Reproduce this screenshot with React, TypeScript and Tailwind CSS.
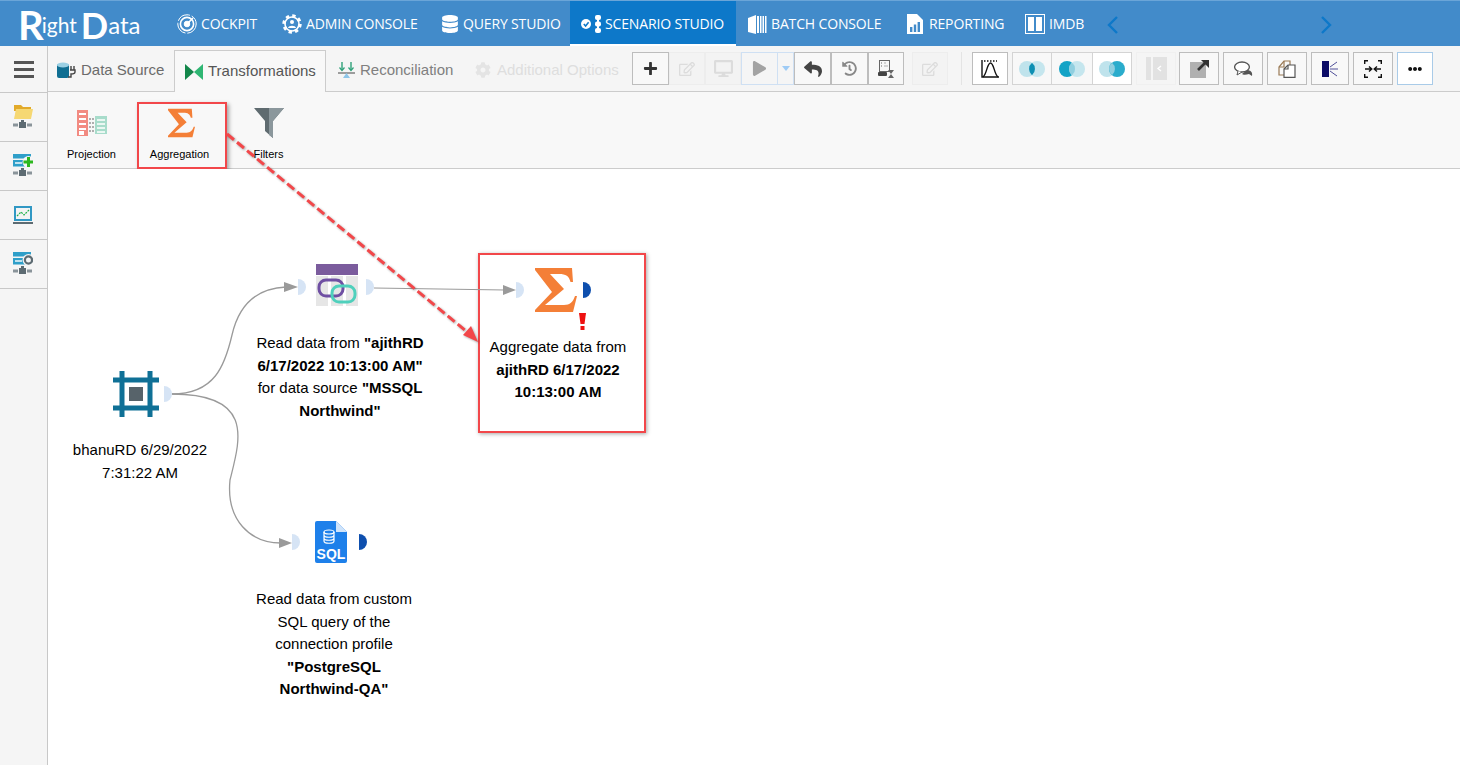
import React from "react";
import { FaDatabase, FaReply, FaHistory, FaPlus, FaPlay, FaDesktop, FaRegEdit, FaCog, FaEllipsisH } from "react-icons/fa";

const CockpitIcon = () => (
  <svg width="20" height="20" viewBox="0 0 20 20" fill="none" stroke="#fff">
    <circle cx="10" cy="10" r="9.2" strokeWidth="1" strokeDasharray="14 2" />
    <circle cx="10" cy="10" r="6.6" strokeWidth="1.6" />
    <circle cx="10" cy="10" r="2.8" fill="#fff" strokeWidth="1" />
    <path d="M10 10 L16 4" strokeWidth="1.6" />
  </svg>
);

const AdminIcon = () => (
  <svg width="20" height="20" viewBox="0 0 20 20" fill="none" stroke="#fff">
    <circle cx="10" cy="10" r="8" strokeWidth="3.4" strokeDasharray="3.2 3.08" />
    <circle cx="10" cy="10" r="7" strokeWidth="1.6" />
    <circle cx="10" cy="8" r="2" fill="#fff" stroke="none" />
    <path d="M6 14 C6.5 11 13.5 11 14 14 Z" fill="#fff" stroke="none" />
  </svg>
);

const ScenarioIcon = () => (
  <svg width="20" height="20" viewBox="0 0 20 20">
    <circle cx="5" cy="10" r="5" fill="#fff" />
    <path d="M2.8 10 L4.6 12 L7.6 8.2" stroke="#0d78c9" strokeWidth="1.5" fill="none" />
    <rect x="14" y="1" width="6" height="5" rx="2" fill="#fff" />
    <rect x="14" y="7.5" width="6" height="5" rx="2" fill="#fff" />
    <rect x="14" y="14" width="6" height="5" rx="2" fill="#fff" />
    <rect x="16" y="4" width="2" height="12" fill="#fff" />
  </svg>
);

const BatchIcon = () => (
  <svg width="19" height="20" viewBox="0 0 19 20">
    <path d="M0 4 L8 1 V20 L0 18 Z" fill="#fff" />
    <rect x="9" y="2" width="2" height="17" fill="#fff" />
    <rect x="12" y="2" width="1.5" height="17" fill="#fff" />
    <rect x="14.5" y="2" width="1.5" height="17" fill="#fff" />
    <rect x="17" y="2" width="1.5" height="17" fill="#fff" />
  </svg>
);

const ReportingIcon = () => (
  <svg width="16" height="20" viewBox="0 0 16 20">
    <path d="M0 0 H10 L16 6 V20 H0 Z" fill="#fff" />
    <rect x="3" y="13" width="2.4" height="5" fill="#428bca" />
    <rect x="6.8" y="10.5" width="2.4" height="7.5" fill="#428bca" />
    <rect x="10.6" y="8" width="2.4" height="10" fill="#428bca" />
  </svg>
);

const ImdbIcon = () => (
  <svg width="20" height="20" viewBox="0 0 20 20">
    <rect x="0.5" y="0.5" width="19" height="19" fill="none" stroke="#fff" />
    <rect x="3" y="3" width="6" height="14" fill="#fff" />
    <rect x="11" y="3" width="6" height="14" fill="#fff" />
  </svg>
);

const navItems = [
  { label: "COCKPIT", icon: <CockpitIcon />, cls: "w-[105px] gap-[4px] pl-[11px] border-transparent" },
  { label: "ADMIN CONSOLE", icon: <AdminIcon />, cls: "w-[159px] gap-[4px] pl-[11px] border-transparent" },
  { label: "QUERY STUDIO", icon: <FaDatabase size={18} color="#fff" />, cls: "w-[140px] gap-[4px] pl-[11px] border-transparent" },
  { label: "SCENARIO STUDIO", icon: <ScenarioIcon />, cls: "w-[166px] gap-[4px] pl-[11px] border-white bg-[#0d78c9]" },
  { label: "BATCH CONSOLE", icon: <BatchIcon />, cls: "w-[160px] gap-[4px] pl-[12px] border-transparent" },
  { label: "REPORTING", icon: <ReportingIcon />, cls: "w-[118px] gap-[6px] pl-[11px] border-transparent" },
  { label: "IMDB", icon: <ImdbIcon />, cls: "w-[79px] gap-[4px] pl-[11px] border-transparent" },
];

const Chevron = ({ d }: { d: string }) => (
  <svg width="12" height="20" viewBox="0 0 12 20" fill="none" stroke="#0d78c9" strokeWidth="2.4">
    <path d={d} />
  </svg>
);

const TopBar = () => (
  <div className="flex h-[46px] items-stretch border-t border-[#6aa5d8] bg-[#428bca] text-white font-['Open_Sans',sans-serif]">
    <div className="flex w-[166px] shrink-0 items-center pl-[18px] pt-[2px] font-['Lato',sans-serif] font-bold leading-none">
      <span className="text-[40px]">R</span>
      <span className="-ml-[2px] text-[21px] font-normal">ight</span>
      <span className="ml-[4px] text-[36px]">D</span>
      <span className="text-[24px] font-normal">ata</span>
    </div>
    {navItems.map((item) => (
      <div key={item.label} className={`flex shrink-0 items-center border-b-2 pt-[2px] ${item.cls}`}>
        {item.icon}
        <span className="text-[14px] tracking-[-0.15px]">{item.label}</span>
      </div>
    ))}
    <div className="ml-[14px] flex items-center pt-[2px]">
      <Chevron d="M10 2 L2 10 L10 18" />
    </div>
    <div className="ml-[201px] flex items-center pt-[2px]">
      <Chevron d="M2 2 L10 10 L2 18" />
    </div>
  </div>
);

const DbIcon = () => (
  <svg width="20" height="17" viewBox="0 0 20 17">
    <rect x="0" y="2" width="12" height="14" rx="2" fill="#0f6e92" />
    <ellipse cx="6" cy="3" rx="6" ry="2.4" fill="#9bd0e4" />
    <path d="M14 4 V8 M17 4 V8 M13 8 H18 V10 C18 12 14 12 14 12 V15 H11" stroke="#444" strokeWidth="1.4" fill="none" />
  </svg>
);

const BowtieIcon = () => (
  <svg width="18" height="16" viewBox="0 0 18 16">
    <path d="M0 0 L9 8 L0 16 Z" fill="#13874b" />
    <path d="M18 0 L9 8 L18 16 Z" fill="#2fb673" />
  </svg>
);

const ReconIcon = () => (
  <svg width="17" height="17" viewBox="0 0 17 17" fill="none">
    <path d="M4 0 V8 M13 0 V8" stroke="#2fa27a" strokeWidth="1.4" />
    <path d="M1.5 5.5 L4 8.5 L6.5 5.5 M10.5 5.5 L13 8.5 L15.5 5.5" stroke="#2fa27a" strokeWidth="1.2" />
    <path d="M0 11 H17" stroke="#777" strokeWidth="1.4" />
    <path d="M8.5 11 L5 16 H12 Z" fill="#8dc5e8" />
  </svg>
);

const BellIcon = () => (
  <svg width="18" height="18" viewBox="0 0 18 18" fill="none" stroke="#111" strokeWidth="1.4">
    <path d="M1 0 V17 H18" />
    <path d="M2 17 C6 14 6 3 9.5 3 C13 3 13 14 17 17" />
    <path d="M3 1 H16" strokeDasharray="1.5 1.5" />
  </svg>
);

const Venn = ({ mode }: { mode: "inner" | "left" | "right" }) => (
  <svg width="26" height="16" viewBox="0 0 26 16">
    <circle cx="8" cy="8" r="8" fill={mode === "left" ? "#13a3c6" : "#bfe3ec"} />
    <circle cx="18" cy="8" r="8" fill={mode === "right" ? "#13a3c6" : "#bfe3ec"} fillOpacity="0.9" />
    <path d="M13 1.8 A8 8 0 0 1 13 14.2 A8 8 0 0 1 13 1.8 Z" fill={mode === "inner" ? "#0d8fb3" : "#8fcfe0"} />
  </svg>
);

const HourglassIcon = () => (
  <svg width="16" height="18" viewBox="0 0 16 18">
    <rect x="1.5" y="0.5" width="10" height="11" fill="none" stroke="#666" />
    <path d="M3 3 H5 M6.5 3 H8 M3 6 H5 M6.5 6 H10" stroke="#666" strokeDasharray="1 1" />
    <rect x="0" y="12" width="9" height="4" rx="1" fill="#444" />
    <path d="M10 10 H16 L13 14 L16 18 H10 L13 14 Z" fill="#666" />
  </svg>
);

const ExportIcon = () => (
  <svg width="19" height="18" viewBox="0 0 19 18">
    <rect x="0" y="2" width="16" height="16" fill="#b0b0b0" />
    <path d="M8 10 L16 2" stroke="#333" strokeWidth="2.6" />
    <path d="M11 0 H19 V8 Z" fill="#333" />
  </svg>
);

const CommentsIcon = () => (
  <svg width="19" height="15" viewBox="0 0 19 15" fill="none">
    <path d="M13 9 C16 9 19 11 18 15 L15 13 C12 14 9 14 8 13 Z" fill="#555" />
    <ellipse cx="8" cy="6" rx="7.4" ry="5" fill="#fff" stroke="#555" strokeWidth="1.3" />
    <path d="M4 10 L3 14 L8 11" fill="#fff" stroke="#555" />
  </svg>
);

const CopyIcon = () => (
  <svg width="18" height="18" viewBox="0 0 18 18" fill="none" strokeWidth="1.2">
    <path d="M12 5 V1 H6 L1 7 V15 H6" stroke="#9a7a55" />
    <path d="M6 1 V7 H1" stroke="#9a7a55" />
    <path d="M6 9 L10 5 H17 V17.4 H6 Z" fill="#fff" stroke="#555" />
    <path d="M10 5 V9 H6" stroke="#555" />
  </svg>
);

const SplitIcon = () => (
  <svg width="16" height="16" viewBox="0 0 16 16">
    <rect x="0" y="0" width="7" height="16" fill="#0b0b66" />
    <path d="M8 6 L15 1 M8 8 H16 M8 10 L15 15" stroke="#3d3d8f" strokeWidth="0.9" />
  </svg>
);

const CollapseIcon = () => (
  <svg width="18" height="18" viewBox="0 0 18 18" fill="none" stroke="#111" strokeWidth="1.4">
    <path d="M0.7 4 V0.7 H4 M14 0.7 H17.3 V4 M0.7 14 V17.3 H4 M14 17.3 H17.3 V14" />
    <path d="M1 9 H7.5 M5 6.5 L7.8 9 L5 11.5 M17 9 H10.5 M13 6.5 L10.2 9 L13 11.5" />
  </svg>
);

const PanelIcon = () => (
  <svg width="21" height="23" viewBox="0 0 21 23">
    <rect x="0" y="0" width="5" height="23" fill="#e2e2e2" />
    <rect x="7" y="0" width="14" height="23" fill="#e2e2e2" />
    <path d="M15 9 L12 11.5 L15 14" stroke="#fff" strokeWidth="1.4" fill="none" />
  </svg>
);

const btn = "flex h-[33px] items-center justify-center border border-[#bdbdbd] bg-[#f8f8f8]";
const ghost = "flex h-[33px] items-center justify-center border border-[#ededed] bg-[#f3f3f3]";

const Toolbar = () => (
  <div className="flex items-center">
    <div className="flex">
      <div className={`${btn} w-[37px]`}><FaPlus size={15} color="#333" /></div>
      <div className={`${ghost} w-[36px]`}><FaRegEdit size={16} color="#dcdcdc" /></div>
      <div className={`${ghost} w-[36px]`}><FaDesktop size={19} color="#dcdcdc" /></div>
      <div className="flex h-[33px] w-[37px] items-center justify-center border border-[#cfe0f3] bg-[#f5f5f5]"><FaPlay size={15} color="#a3a3a3" /></div>
      <div className="flex h-[33px] w-[16px] items-center justify-center border-y border-r border-[#cfe0f3] bg-[#f5f5f5]">
        <div className="h-0 w-0 border-x-[4px] border-t-[5px] border-x-transparent border-t-[#9ecbf5]" />
      </div>
      <div className={`${btn} w-[37px]`}><FaReply size={18} color="#444" /></div>
      <div className={`${btn} w-[37px]`}><FaHistory size={15} color="#888" /></div>
      <div className={`${btn} w-[36px]`}><HourglassIcon /></div>
    </div>
    <div className={`${ghost} ml-[8px] w-[36px]`}><FaRegEdit size={16} color="#dcdcdc" /></div>
    <div className="ml-[13px] h-[33px] w-px bg-[#e4e4e4]" />
    <div className="ml-[10px] flex h-[33px] w-[36px] items-center justify-center border border-[#bdbdbd] bg-white"><BellIcon /></div>
    <div className="ml-[4px] flex">
      <div className="flex h-[33px] w-[40px] items-center justify-center border border-[#d4d4d4] bg-[#f8f8f8]"><Venn mode="inner" /></div>
      <div className="flex h-[33px] w-[40px] items-center justify-center border-y border-[#d4d4d4] bg-[#f8f8f8]"><Venn mode="left" /></div>
      <div className="flex h-[33px] w-[40px] items-center justify-center border border-[#d4d4d4] bg-white"><Venn mode="right" /></div>
    </div>
    <div className="ml-[4px] flex h-[33px] w-[40px] items-center justify-center border border-[#f0f0f0]"><PanelIcon /></div>
    <div className="ml-[3px] flex h-[33px] w-[40px] items-center justify-center border border-[#bdbdbd] bg-[#f8f8f8]"><ExportIcon /></div>
    <div className={`${btn} ml-[4px] w-[40px]`}><CommentsIcon /></div>
    <div className={`${btn} ml-[4px] w-[40px]`}><CopyIcon /></div>
    <div className={`${btn} ml-[4px] w-[38px]`}><SplitIcon /></div>
    <div className={`${btn} ml-[4px] w-[40px]`}><CollapseIcon /></div>
    <div className="ml-[4px] flex h-[33px] w-[36px] items-center justify-center border border-[#a9cbe8] bg-white"><FaEllipsisH size={14} color="#111" /></div>
  </div>
);

const TabRow = () => (
  <div className="relative flex h-[46px] border-b border-[#cccccc] bg-[#f5f5f5] text-[15px] font-['Liberation_Sans',sans-serif]">
    <div className="flex w-[126px] items-center gap-[4px] pl-[9px] pt-[3px] text-[#6b6b6b]">
      <DbIcon />
      <span>Data Source</span>
    </div>
    <div className="mt-[4px] -mb-px flex h-[42px] w-[152px] items-center gap-[5px] border border-b-0 border-[#cccccc] bg-[#f8f8f8] pl-[10px] text-[#555555]">
      <BowtieIcon />
      <span>Transformations</span>
    </div>
    <div className="flex w-[149px] items-center gap-[5px] pl-[12px] pt-[3px] text-[#808080]">
      <ReconIcon />
      <span>Reconciliation</span>
    </div>
    <div className="flex w-[151px] items-center gap-[6px] pt-[3px] text-[#dedede]">
      <FaCog size={16} color="#e4e4e4" />
      <span>Additional Options</span>
    </div>
    <div className="ml-[6px] flex items-center"><Toolbar /></div>
  </div>
);

const ProjectionIcon = () => (
  <svg width="30" height="26" viewBox="0 0 30 26">
    <rect x="0" y="0" width="11" height="26" fill="#f28b82" />
    <path d="M2 4 H9 M2 9 H9 M2 14 H9 M2 19 H9" stroke="#fff" strokeWidth="2" />
    <rect x="2" y="21" width="5" height="4" fill="#fff" />
    <rect x="18" y="6" width="12" height="18" fill="#a8dccb" />
    <path d="M20 10 H28 M20 14 H28 M20 18 H28 M20 22 H28" stroke="#fff" strokeWidth="1.5" />
    <path d="M12 9 H17 M12 13 H17 M12 17 H17 M12 21 H17" stroke="#666" strokeWidth="1.2" strokeDasharray="2 1" />
  </svg>
);

const Sigma = ({ w, h }: { w: number; h: number }) => (
  <svg width={w} height={h} viewBox="0 0 42 44">
    <path d="M0 0 H37 L38 14 H35.5 C34 8 31 6 24 6 H15 L29 21 L10 37 H29 C35 37 38 34 40 28 H42 L38 44 H0 V42 L17 24 L0 2 Z" fill="#f47f37" />
  </svg>
);

const Funnel = () => (
  <svg width="30" height="30" viewBox="0 0 30 30">
    <path d="M0 0 H30 L19 13 V30 L11 23 V13 Z" fill="#5f6b70" />
    <path d="M15 0 H30 L19 13 V30 L15 27 Z" fill="#8b979c" />
  </svg>
);

const Ribbon = () => (
  <div className="flex h-[77px] border-b border-[#cccccc] bg-[#f8f8f8] text-[11px] text-black font-['Liberation_Sans',sans-serif]">
    <div className="flex w-[87px] flex-col items-center pt-[16px]">
      <div className="flex h-[30px] items-center"><ProjectionIcon /></div>
      <span className="mt-[8px]">Projection</span>
    </div>
    <div className="relative flex w-[89px] flex-col items-center pt-[16px]">
      <div className="flex h-[30px] items-center pl-[3px]"><Sigma w={27} h={30} /></div>
      <span className="mt-[8px]">Aggregation</span>
      <div className="absolute left-[2px] top-[10px] h-[67px] w-[90px] border-2 border-[#f2474a] shadow-[2px_2px_4px_rgba(0,0,0,0.35)]" />
    </div>
    <div className="flex w-[89px] flex-col items-center pt-[16px]">
      <div className="flex h-[30px] items-center"><Funnel /></div>
      <span className="mt-[8px]">Filters</span>
    </div>
  </div>
);

const SideBase = ({ y }: { y: number }) => (
  <g transform={`translate(0,${y})`}>
    <rect x="8" y="0" width="3" height="2" fill="#5d6b72" />
    <rect x="6" y="2" width="7" height="6" fill="#5d6b72" />
    <rect x="0" y="3.5" width="5" height="3" fill="#8a949a" />
    <rect x="14" y="3.5" width="5" height="3" fill="#8a949a" />
  </g>
);

const sideIcons = [
  <svg key="a" width="20" height="24" viewBox="0 0 20 24">
    <path d="M1 0 H8 L10 2 H18 V6 H1 Z" fill="#e2aa2a" />
    <path d="M3 4 H20 L18 14 H1 Z" fill="#f6d873" />
    <SideBase y={15} />
  </svg>,
  <svg key="b" width="20" height="24" viewBox="0 0 20 24">
    <rect x="0" y="0" width="18" height="4.5" fill="#2f9fc9" />
    <rect x="0" y="6" width="14" height="6.5" fill="#2f9fc9" />
    <path d="M2 9 H9" stroke="#fff" strokeWidth="1.4" />
    <circle cx="15.5" cy="8" r="6" fill="#f5f5f5" />
    <path d="M15.5 3 V13 M10.5 8 H20" stroke="#2db81e" strokeWidth="3" />
    <SideBase y={14} />
  </svg>,
  <svg key="c" width="20" height="19" viewBox="0 0 20 19">
    <rect x="1" y="0" width="18" height="15" fill="#3198c4" />
    <rect x="3" y="2" width="14" height="11" fill="#f4f4f4" />
    <path d="M4 10 L8 6 L11 9 L16 4" stroke="#22b14c" strokeWidth="1.2" fill="none" strokeDasharray="2 1" />
    <rect x="0" y="16" width="20" height="2" fill="#5d6b72" />
  </svg>,
  <svg key="d" width="20" height="24" viewBox="0 0 20 24">
    <rect x="0" y="0" width="18" height="4.5" fill="#2f9fc9" />
    <rect x="0" y="6" width="14" height="6.5" fill="#2f9fc9" />
    <path d="M2 9 H9" stroke="#fff" strokeWidth="1.4" />
    <circle cx="15.5" cy="8" r="6" fill="#f5f5f5" />
    <circle cx="15.5" cy="8" r="3.6" fill="none" stroke="#5d6b72" strokeWidth="2.2" />
    <SideBase y={14} />
  </svg>,
];

const Sidebar = () => (
  <div className="flex w-[48px] shrink-0 flex-col border-r border-[#c8c8c8] bg-[#f5f5f5]">
    <div className="flex h-[47px] flex-col items-center justify-center gap-[4px] border-b border-[#c8c8c8]">
      <div className="h-[3px] w-[20px] bg-[#555555]" />
      <div className="h-[3px] w-[20px] bg-[#555555]" />
      <div className="h-[3px] w-[20px] bg-[#555555]" />
    </div>
    {sideIcons.map((icon, i) => (
      <div key={i} className="flex h-[49px] items-center justify-center border-b border-[#c8c8c8] pr-[1px]">
        {icon}
      </div>
    ))}
  </div>
);

const port = (x: number, y: number, fill: string) => (
  <path d={`M${x} ${y - 8} A8 8 0 0 1 ${x} ${y + 8} Z`} fill={fill} />
);

const Overlay = () => (
  <svg className="pointer-events-none absolute left-0 top-0" width="1460" height="765" fill="none">
    <path d="M172 394 C215 394 225 365 232 335 C240 300 262 288 286 287" stroke="#9a9a9a" strokeWidth="1.3" />
    <path d="M172 394 C255 394 240 440 230 480 C226 520 250 543 281 543" stroke="#9a9a9a" strokeWidth="1.3" />
    <path d="M374 288 L505 290" stroke="#9a9a9a" strokeWidth="1.2" />
    <path d="M284 282 L298 287 L284 292 Z" fill="#9a9a9a" />
    <path d="M279 538 L292 543 L279 548 Z" fill="#9a9a9a" />
    <path d="M503 285 L516 290 L503 295 Z" fill="#9a9a9a" />
    {port(164, 394, "#d6e4f5")}
    {port(298, 287, "#d6e4f5")}
    {port(366, 287, "#d6e4f5")}
    {port(516, 290, "#d6e4f5")}
    {port(583, 290, "#0e4fae")}
    {port(292, 542, "#d6e4f5")}
    {port(359, 542, "#0e4fae")}
    <g className="drop-shadow-[1px_1px_1px_rgba(0,0,0,0.35)]">
      <path d="M227 134 L472 336" stroke="#f2474a" strokeWidth="3" strokeDasharray="9 4" />
      <path d="M478 342 L463 335 L471 326 Z" fill="#f2474a" />
    </g>
  </svg>
);

const nodeText = "absolute text-center text-[15px] leading-[22.5px] text-black font-['Liberation_Sans',sans-serif]";

const Canvas = () => (
  <div className="relative flex-1 bg-white">
    <svg className="absolute left-[65px] top-[202px]" width="46" height="46" viewBox="0 0 46 46" fill="none">
      <path d="M0 9 H46 M0 37 H46 M9 0 V46 M37 0 V46" stroke="#0f7096" strokeWidth="5" />
      <rect x="16" y="16" width="14" height="14" fill="#57636a" />
    </svg>
    <div className={`${nodeText} left-[12px] top-[270px] w-[160px]`}>
      bhanuRD 6/29/2022
      <br />
      7:31:22 AM
    </div>

    <svg className="absolute left-[268px] top-[95px]" width="42" height="42" viewBox="0 0 42 42" fill="none">
      <rect x="0" y="0" width="42" height="11" fill="#7b5c9d" />
      <rect x="0" y="12" width="12" height="30" fill="#e6e6e6" />
      <rect x="15" y="12" width="12" height="30" fill="#e6e6e6" />
      <rect x="30" y="12" width="12" height="30" fill="#e6e6e6" />
      <rect x="3" y="16" width="24" height="16" rx="7" stroke="#6f4fa3" strokeWidth="3" />
      <rect x="16" y="22" width="23" height="16" rx="7" stroke="#4fd0bc" strokeWidth="3" />
    </svg>
    <div className={`${nodeText} left-[197px] top-[163px] w-[190px]`}>
      Read data from <b>"ajithRD</b>
      <br />
      <b>6/17/2022 10:13:00 AM"</b>
      <br />
      for data source <b>"MSSQL</b>
      <br />
      <b>Northwind"</b>
    </div>

    <div className="absolute left-[430px] top-[84px] h-[180px] w-[168px] border-2 border-[#f2474a] shadow-[1px_1px_4px_rgba(0,0,0,0.35)]" />
    <div className="absolute left-[487px] top-[99px]"><Sigma w={42} h={44} /></div>
    <svg className="absolute left-[531px] top-[144px]" width="7" height="18" viewBox="0 0 7 18">
      <path d="M0 0 H7 L5.5 11 H1.5 Z" fill="#ee1111" />
      <rect x="1.5" y="13" width="4" height="4" fill="#ee1111" />
    </svg>
    <div className={`${nodeText} left-[435px] top-[167px] w-[150px]`}>
      Aggregate data from
      <br />
      <b>ajithRD 6/17/2022</b>
      <br />
      <b>10:13:00 AM</b>
    </div>

    <svg className="absolute left-[267px] top-[352px]" width="32" height="42" viewBox="0 0 32 42">
      <path d="M2 0 H21 L32 11 V40 A2 2 0 0 1 30 42 H2 A2 2 0 0 1 0 40 V2 A2 2 0 0 1 2 0 Z" fill="#1e80ea" />
      <path d="M21 0 L32 11 H21 Z" fill="#cfe4fb" />
      <ellipse cx="14" cy="11" rx="5" ry="2" fill="none" stroke="#fff" strokeWidth="1.2" />
      <path d="M9 11 V20 C9 23 19 23 19 20 V11 M9 14 C9 17 19 17 19 14 M9 17 C9 20 19 20 19 17" fill="none" stroke="#fff" strokeWidth="1.2" />
      <text x="16" y="38" textAnchor="middle" fill="#fff" fontSize="14" fontWeight="700" fontFamily="Liberation Sans">SQL</text>
    </svg>
    <div className={`${nodeText} left-[196px] top-[419px] w-[180px]`}>
      Read data from custom
      <br />
      SQL query of the
      <br />
      connection profile
      <br />
      <b>"PostgreSQL</b>
      <br />
      <b>Northwind-QA"</b>
    </div>
  </div>
);

export default function App() {
  return (
    <div className="relative flex h-[765px] w-[1460px] flex-col overflow-hidden bg-white">
      <TopBar />
      <div className="flex flex-1">
        <Sidebar />
        <div className="flex flex-1 flex-col">
          <TabRow />
          <Ribbon />
          <Canvas />
        </div>
      </div>
      <Overlay />
    </div>
  );
}
